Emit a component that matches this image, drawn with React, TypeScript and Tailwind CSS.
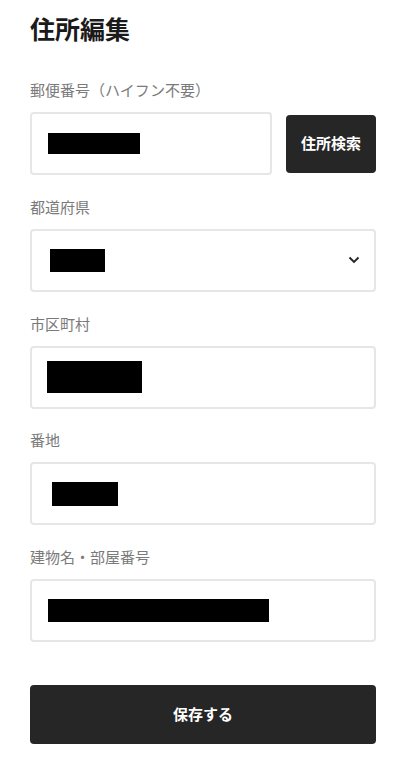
export default function App() {
    const fields = [
        { label: "市区町村", mask: "ml-[15px] w-[95px] h-[32px]" },
        { label: "番地", mask: "ml-[20px] w-[66px] h-[24px]" },
        { label: "建物名・部屋番号", mask: "ml-[16px] w-[221px] h-[23px]" },
    ]

    return (
        <div
            className="min-h-[769px] bg-white pl-[30px] pr-[34px] pt-[12px] pb-[25px]"
            style={{ fontFamily: '"Noto Sans CJK JP", "Noto Sans", sans-serif' }}
        >
            <h1 className="text-[25px] leading-[32px] font-bold text-[#1a1a1a]">住所編集</h1>

            <div className="mt-[36px] flex flex-col gap-[21.75px]">
                <div>
                    <label className="block text-[15px] leading-[20px] text-[#7a7a7a] mb-[12px]">
                        郵便番号（ハイフン不要）
                    </label>
                    <div className="flex items-center gap-[14px]">
                        <div className="w-[242px] h-[63px] border-2 border-[#e6e6e6] rounded-[4px] flex items-center">
                            <div className="ml-[16px] w-[92px] h-[21px] bg-black" />
                        </div>
                        <button className="w-[90px] h-[58px] rounded-[4px] bg-[#262626] text-white text-[15px] font-bold">
                            住所検索
                        </button>
                    </div>
                </div>

                <div>
                    <label className="block text-[15px] leading-[20px] text-[#7a7a7a] mb-[12px]">
                        都道府県
                    </label>
                    <div className="h-[63px] border-2 border-[#e6e6e6] rounded-[4px] flex items-center justify-between">
                        <div className="ml-[18px] w-[55px] h-[23px] bg-black" />
                        <svg
                            className="mr-[14px]"
                            width="12"
                            height="8"
                            viewBox="0 0 12 8"
                            fill="none"
                            stroke="#222"
                            strokeWidth={1.8}
                        >
                            <polyline points="1.5,1.5 6,6 10.5,1.5" />
                        </svg>
                    </div>
                </div>

                {fields.map((f) => (
                    <div key={f.label}>
                        <label className="block text-[15px] leading-[20px] text-[#7a7a7a] mb-[12px]">
                            {f.label}
                        </label>
                        <div className="h-[63px] border-2 border-[#e6e6e6] rounded-[4px] flex items-center">
                            <div className={`${f.mask} bg-black`} />
                        </div>
                    </div>
                ))}
            </div>

            <button className="mt-[43px] w-full h-[59px] rounded-[4px] bg-[#262626] text-white text-[15px] font-bold">
                保存する
            </button>
        </div>
    )
}
